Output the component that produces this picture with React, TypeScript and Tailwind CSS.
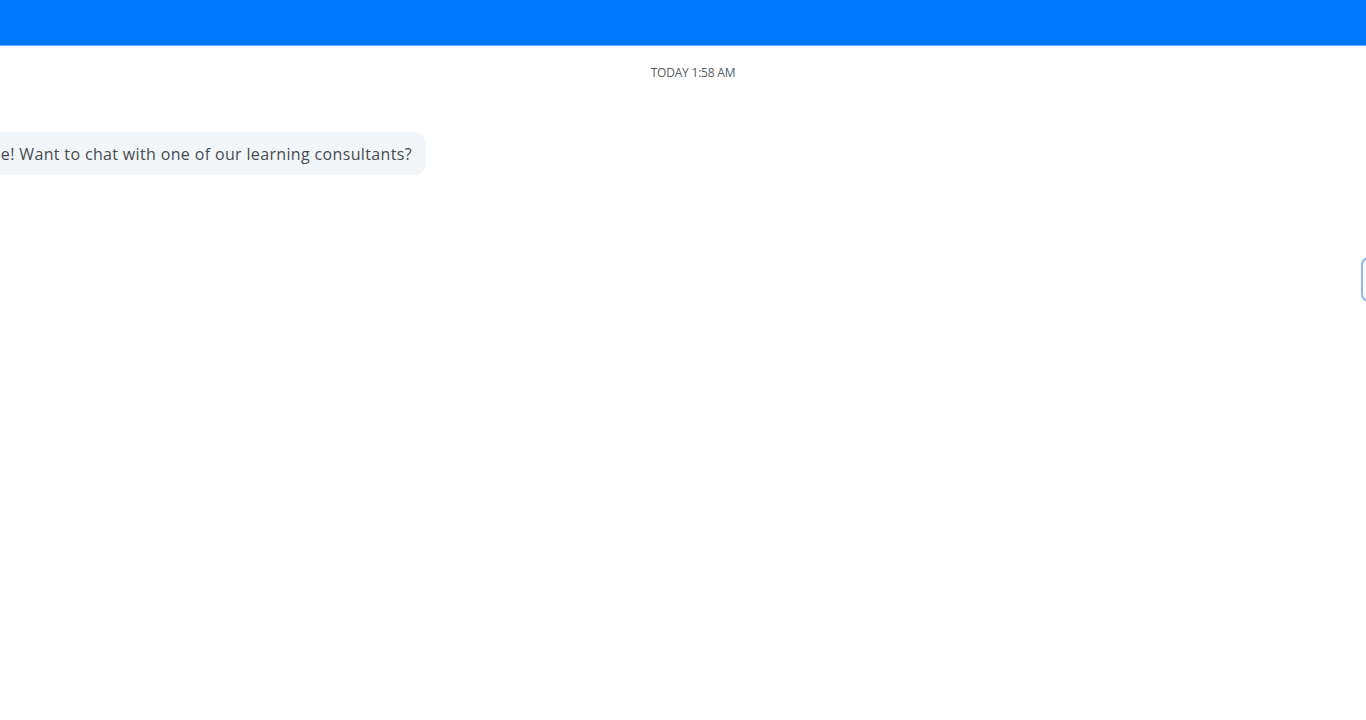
import React from "react";

export default function App() {
  return (
    <div
      className="w-[1366px] h-[720px] overflow-hidden bg-white flex flex-col"
      style={{ fontFamily: '"Open Sans", "Noto Sans", sans-serif' }}
    >
      <div className="h-[46px] bg-[#0077ff] border-b border-[#6aaeff] shrink-0" />
      <div className="flex justify-center pt-[20px] pl-[20px]">
        <span className="text-[12px] leading-[14px] text-[#555a60] tracking-[-0.2px]">TODAY 1:58 AM</span>
      </div>
      <div className="w-[426px] flex justify-end overflow-hidden mt-[52px]">
        <div className="shrink-0 whitespace-nowrap bg-[#f3f6f9] rounded-[12px] h-[43px] flex items-center pl-[14px] pr-[14px] text-[16px] tracking-[0.35px] text-[#464b51]">
          Welcome! Want to chat with one of our learning consultants?
        </div>
      </div>
      <div className="flex justify-end mt-[82px]">
        <div className="w-[20px] h-[45px] mr-[-15px] border-2 border-[#8cb5ee] rounded-[8px] bg-white shrink-0" />
      </div>
    </div>
  );
}
